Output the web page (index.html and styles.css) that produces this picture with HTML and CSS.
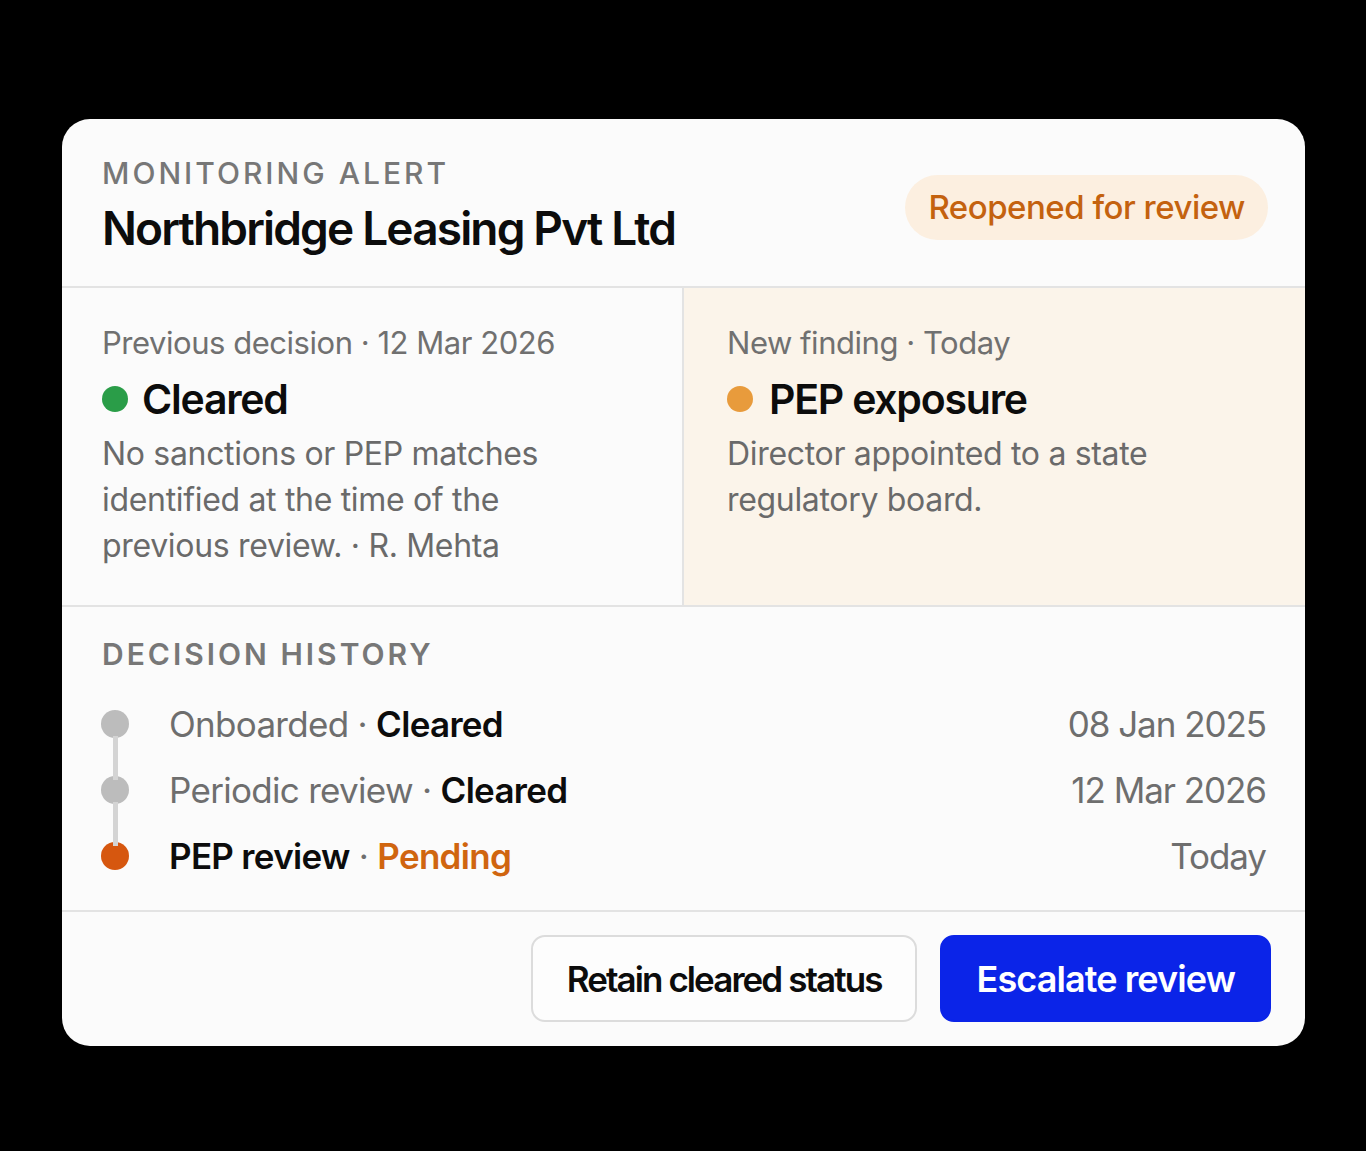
FILE: index.html
```html
<!DOCTYPE html>
<html>
    <head>
        <title>Monitoring alert</title>
        <link rel="stylesheet" href="styles.css">
    </head>
    <body>
        <div class="card">
            <div class="head">
                <div class="head-text">
                    <div class="eyebrow">MONITORING ALERT</div>
                    <h1 class="title">Northbridge Leasing Pvt Ltd</h1>
                </div>
                <span class="badge">Reopened for review</span>
            </div>

            <div class="compare">
                <div class="col">
                    <div class="meta">Previous decision · 12 Mar 2026</div>
                    <div class="status"><span class="dot green"></span>Cleared</div>
                    <p class="desc">No sanctions or PEP matches identified at the time of the previous review. · R. Mehta</p>
                </div>
                <div class="col new">
                    <div class="meta">New finding · Today</div>
                    <div class="status"><span class="dot amber"></span>PEP exposure</div>
                    <p class="desc">Director appointed to a state regulatory board.</p>
                </div>
            </div>

            <div class="history">
                <div class="eyebrow strong">DECISION HISTORY</div>
                <ul class="timeline">
                    <li class="step">
                        <span class="node"></span>
                        <span class="what">Onboarded · <b>Cleared</b></span>
                        <span class="when">08 Jan 2025</span>
                    </li>
                    <li class="step">
                        <span class="node"></span>
                        <span class="what">Periodic review · <b>Cleared</b></span>
                        <span class="when">12 Mar 2026</span>
                    </li>
                    <li class="step current">
                        <span class="node"></span>
                        <span class="what"><b>PEP review</b> · <b class="pending">Pending</b></span>
                        <span class="when">Today</span>
                    </li>
                </ul>
            </div>

            <div class="actions">
                <button class="btn">Retain cleared status</button>
                <button class="btn primary">Escalate review</button>
            </div>
        </div>
    </body>
</html>
```

FILE: styles.css
```css
body {
    margin: 0;
    background: #000;
    font-family: Inter, "Noto Sans", sans-serif;
    color: #111;
}

.card {
    width: 1243px;
    margin: 119px 0 0 62px;
    background: #fbfbfb;
    border-radius: 28px;
    overflow: hidden;
}

/* header */
.head {
    display: flex;
    justify-content: space-between;
    align-items: center;
    padding: 36px 37px 30px 40px;
    border-bottom: 2px solid #e3e3e3;
}
.eyebrow {
    font-size: 30px;
    line-height: 36px;
    font-weight: 500;
    letter-spacing: 0.1em;
    color: #777;
}
.eyebrow.strong {
    font-weight: 600;
}
.title {
    margin: 9px 0 0;
    font-size: 46px;
    line-height: 56px;
    font-weight: 600;
    letter-spacing: -0.04em;
    color: #0c0c0c;
}
.badge {
    margin-top: 4px;
    padding: 14px 23px;
    border-radius: 34px;
    background: #fcefe0;
    color: #c4620f;
    font-size: 33px;
    line-height: 37px;
    font-weight: 500;
    letter-spacing: -0.015em;
}

/* previous vs new */
.compare {
    display: grid;
    grid-template-columns: 620px 1fr;
    border-bottom: 2px solid #e3e3e3;
}
.col {
    padding: 35px 40px 36px 40px;
}
.col.new {
    background: #fbf4ea;
    border-left: 2px solid #e3e3e3;
    padding-left: 43px;
}
.meta {
    font-size: 31px;
    line-height: 40px;
    color: #707070;
    letter-spacing: -0.015em;
}
.status {
    display: flex;
    align-items: center;
    margin-top: 11px;
    font-size: 41px;
    line-height: 50px;
    font-weight: 600;
    letter-spacing: -0.03em;
    color: #0c0c0c;
}
.dot {
    width: 26px;
    height: 26px;
    border-radius: 50%;
    margin-right: 14px;
}
.dot.green { background: #2a9d48; }
.dot.amber { background: #e89b3c; margin-right: 16px; }
.desc {
    max-width: 500px;
    margin: 7px 0 0;
    font-size: 32px;
    line-height: 46px;
    color: #6a6a6a;
    letter-spacing: -0.01em;
}

/* history */
.history {
    padding: 29px 39px 21px 39px;
    border-bottom: 2px solid #e3e3e3;
}
.history .eyebrow { margin-left: 1px; }
.timeline {
    list-style: none;
    margin: 19px 0 0;
    padding: 0;
}
.step {
    display: flex;
    align-items: center;
    height: 66px;
    font-size: 35px;
    letter-spacing: -0.02em;
    color: #6e6e6e;
}
.step b {
    font-weight: 600;
    color: #0c0c0c;
}
.step b.pending { color: #d0650f; }
.node {
    position: relative;
    width: 28px;
    height: 28px;
    border-radius: 50%;
    background: #bcbcbc;
    margin-right: 40px;
    flex: none;
}
.step + .step .node::before {
    content: "";
    position: absolute;
    left: 12px;
    bottom: 24px;
    width: 5px;
    height: 44px;
    background: #d4d4d4;
}
.step.current .node { background: #d6570f; }
.what { flex: 1; }
.when {
    color: #6e6e6e;
    letter-spacing: -0.03em;
}

/* buttons */
.actions {
    display: flex;
    justify-content: flex-end;
    gap: 23px;
    padding: 23px 34px 24px;
}
.btn {
    height: 87px;
    padding: 0 34px;
    border: 2px solid #dcdcdc;
    border-radius: 14px;
    background: #fdfdfd;
    font-family: Inter, "Noto Sans", sans-serif;
    font-size: 35px;
    font-weight: 600;
    letter-spacing: -0.055em;
    color: #0c0c0c;
}
.btn.primary {
    background: #0b24e8;
    border-color: #0b24e8;
    color: #fff;
    font-size: 36px;
    letter-spacing: -0.025em;
}
```
